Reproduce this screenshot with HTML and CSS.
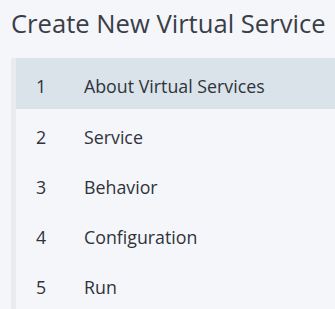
FILE: index.html
```html
<!DOCTYPE html>
<html>
<head>
<meta charset="utf-8">
<link rel="stylesheet" href="styles.css">
</head>
<body>
<div class="page">
  <h1 class="title">Create New Virtual Service</h1>
  <ol class="steps">
    <li class="step active"><span class="num">1</span><span class="label">About Virtual Services</span></li>
    <li class="step"><span class="num">2</span><span class="label">Service</span></li>
    <li class="step"><span class="num">3</span><span class="label">Behavior</span></li>
    <li class="step"><span class="num">4</span><span class="label">Configuration</span></li>
    <li class="step"><span class="num">5</span><span class="label">Run</span></li>
  </ol>
</div>
</body>
</html>
```
FILE: styles.css
```css
html, body {
  margin: 0;
  padding: 0;
  height: 100%;
  background: #f5f6fa;
  font-family: "Open Sans", "Noto Sans", sans-serif;
  overflow: hidden;
}
.page {
  height: 100%;
  display: flex;
  flex-direction: column;
  padding: 0 0 0 11px;
}
.title {
  margin: 0;
  padding: 6px 0 0 0;
  height: 58px;
  box-sizing: border-box;
  font-size: 25.6px;
  font-weight: 400;
  color: #3a3e48;
  white-space: nowrap;
  line-height: 35px;
  flex: none;
}
.steps {
  list-style: none;
  margin: 0;
  padding: 0;
  flex: 1;
  border-left: 5px solid #ebebed;
}
.step {
  display: flex;
  align-items: center;
  height: 50px;
  padding-top: 5px;
  box-sizing: border-box;
  font-size: 17.8px;
  color: #2f333b;
}
.step.active {
  height: 51px;
  background: #d9e3e9;
}
.num {
  width: 48px;
  padding-left: 20px;
  box-sizing: border-box;
}
.label {
  padding-left: 20px;
}
```
